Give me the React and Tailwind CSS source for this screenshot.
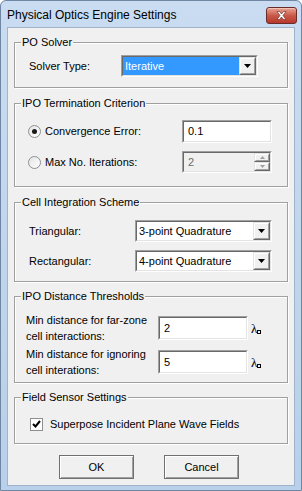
const FONT = { fontFamily: '"Liberation Sans", Arial, sans-serif' };

function Group({ label, className, children }) {
  return (
    <div className={`relative mx-[6px] border border-[#a0a0a0] shadow-[inset_1px_1px_0_#ffffff,1px_1px_0_#ffffff] ${className}`}>
      <span className="absolute -top-[8px] left-[6px] bg-[#f0f0f0] px-[1px] text-[11px] leading-[14px] text-black">
        {label}
      </span>
      {children}
    </div>
  );
}

function Sunken({ className, children }) {
  return (
    <div className={`border border-t-[#a0a0a0] border-l-[#a0a0a0] border-b-white border-r-white ${className}`}>
      <div className="h-full w-full border border-t-[#696969] border-l-[#696969] border-b-[#e3e3e3] border-r-[#e3e3e3]">
        {children}
      </div>
    </div>
  );
}

function Raised({ className, children }) {
  return (
    <div className={`border border-t-[#e3e3e3] border-l-[#e3e3e3] border-b-[#696969] border-r-[#696969] bg-[#f0f0f0] ${className}`}>
      <div className="flex h-full w-full items-center justify-center border border-t-white border-l-white border-b-[#a0a0a0] border-r-[#a0a0a0]">
        {children}
      </div>
    </div>
  );
}

function Combo({ value, selected, className }) {
  return (
    <Sunken className={`h-[22px] w-[137px] ${className}`}>
      <div className="flex h-full bg-white">
        <div className={`flex flex-1 items-center pl-[2px] text-[11px] ${selected ? 'bg-[#3399ff] text-white' : 'text-black'}`}>
          {value}
        </div>
        <Raised className="h-full w-[17px]">
          <svg width="7" height="4" viewBox="0 0 7 4"><path d="M0 0h7L3.5 4z" fill="#000" /></svg>
        </Raised>
      </div>
    </Sunken>
  );
}

function Radio({ checked }) {
  return (
    <div className="flex h-[13px] w-[13px] items-center justify-center rounded-full border border-[#8e8f8f] bg-gradient-to-br from-[#e4e4e4] to-white">
      {checked && <div className="h-[5px] w-[5px] rounded-full bg-[#1a1a1a]" />}
    </div>
  );
}

function Lambda() {
  return (
    <span className="ml-[3px] flex items-end text-[13px] leading-none text-black" style={{ fontFamily: '"Liberation Serif", serif' }}>
      λ<span className="mb-[1px] h-[4px] w-[4px] border border-black" />
    </span>
  );
}

export default function App() {
  return (
    <div style={FONT} className="flex h-[491px] w-[302px] flex-col overflow-hidden rounded-t-[6px] border border-[#6f87a3] bg-gradient-to-b from-[#c9dcf1] to-[#b8d0ea]">
      <div className="flex h-[26px] shrink-0 items-center justify-between pl-[6px] pr-[4px]">
        <span className="pt-[2px] text-[12px] text-black">
          Physical Optics Engine Settings
        </span>
        <div className="mt-[3px] flex h-[17px] w-[31px] items-center justify-center rounded-[3px] border border-[#6a2c2a] bg-gradient-to-b from-[#e8a493] via-[#c9594a] to-[#b8372a] shadow-[inset_0_1px_0_#f3c3b6]">
          <svg width="11" height="9" viewBox="0 0 11 9">
            <path d="M1 0.5h2.5L5.5 3l2-2.5H10L7 4.5l3 4H7.5L5.5 6l-2 2.5H1l3-4z" fill="#fff" stroke="#5a2320" strokeWidth="0.6" />
          </svg>
        </div>
      </div>

      <div className="mx-[6px] mb-[4px] flex flex-1 flex-col border border-[#9fb3cb] bg-[#f0f0f0] pt-[14px] text-[11px] text-black">
        <Group label="PO Solver" className="h-[46px]">
          <div className="flex items-center pt-[12px]">
            <span className="w-[106px] pl-[14px]">Solver Type:</span>
            <Combo value="Iterative" selected />
          </div>
        </Group>

        <Group label="IPO Termination Criterion" className="mt-[15px] h-[84px]">
          <div className="flex flex-col gap-[8px] pt-[16px]">
            <div className="flex items-center">
              <div className="flex w-[167px] items-center gap-[4px] pl-[13px]">
                <Radio checked />
                <span>Convergence Error:</span>
              </div>
              <Sunken className="h-[23px] w-[90px]">
                <div className="flex h-full items-center bg-white pl-[4px]">0.1</div>
              </Sunken>
            </div>
            <div className="flex items-center">
              <div className="flex w-[167px] items-center gap-[4px] pl-[13px]">
                <Radio />
                <span>Max No. Iterations:</span>
              </div>
              <Sunken className="h-[22px] w-[90px]">
                <div className="flex h-full items-center bg-[#f0f0f0] pl-[4px] text-[#6d6d6d]">
                  <span className="flex-1">2</span>
                  <div className="flex h-full w-[16px] flex-col">
                    <Raised className="flex-1">
                      <svg width="5" height="3" viewBox="0 0 5 3"><path d="M0 3h5L2.5 0z" fill="#a0a0a0" /></svg>
                    </Raised>
                    <Raised className="flex-1">
                      <svg width="5" height="3" viewBox="0 0 5 3"><path d="M0 0h5L2.5 3z" fill="#a0a0a0" /></svg>
                    </Raised>
                  </div>
                </div>
              </Sunken>
            </div>
          </div>
        </Group>

        <Group label="Cell Integration Scheme" className="mt-[15px] h-[80px]">
          <div className="flex flex-col gap-[8px] pt-[17px]">
            <div className="flex items-center">
              <span className="w-[120px] pl-[14px]">Triangular:</span>
              <Combo value="3-point Quadrature" />
            </div>
            <div className="flex items-center">
              <span className="w-[120px] pl-[14px]">Rectangular:</span>
              <Combo value="4-point Quadrature" />
            </div>
          </div>
        </Group>

        <Group label="IPO Distance Thresholds" className="mt-[14px] h-[87px]">
          <div className="flex flex-col gap-[2px] pt-[15px]">
            <div className="flex items-center">
              <span className="w-[143px] pl-[11px] leading-[16px]">Min distance for far-zone<br />cell interactions:</span>
              <Sunken className="h-[24px] w-[90px]">
                <div className="flex h-full items-center bg-white pl-[4px]">2</div>
              </Sunken>
              <Lambda />
            </div>
            <div className="flex items-center">
              <span className="w-[143px] pl-[11px] leading-[16px]">Min distance for ignoring<br />cell interations:</span>
              <Sunken className="h-[24px] w-[90px]">
                <div className="flex h-full items-center bg-white pl-[4px]">5</div>
              </Sunken>
              <Lambda />
            </div>
          </div>
        </Group>

        <Group label="Field Sensor Settings" className="mt-[14px] h-[47px]">
          <div className="flex items-center gap-[7px] pl-[15px] pt-[18px]">
            <div className="flex h-[13px] w-[13px] items-center justify-center border border-[#8e8f8f] bg-white">
              <svg width="9" height="8" viewBox="0 0 9 8"><path d="M1 4l2.5 2.5L8 1" fill="none" stroke="#000" strokeWidth="2" /></svg>
            </div>
            <span>Superpose Incident Plane Wave Fields</span>
          </div>
        </Group>

        <div className="mt-[11px] flex gap-[30px] pl-[51px]">
          <div className="flex h-[24px] w-[75px] items-center justify-center border border-[#707070] bg-[#f0f0f0] shadow-[inset_1px_1px_0_#ffffff,inset_-1px_-1px_0_#a0a0a0]">OK</div>
          <div className="flex h-[24px] w-[75px] items-center justify-center border border-[#707070] bg-[#f0f0f0] shadow-[inset_1px_1px_0_#ffffff,inset_-1px_-1px_0_#a0a0a0]">Cancel</div>
        </div>
      </div>
    </div>
  );
}
